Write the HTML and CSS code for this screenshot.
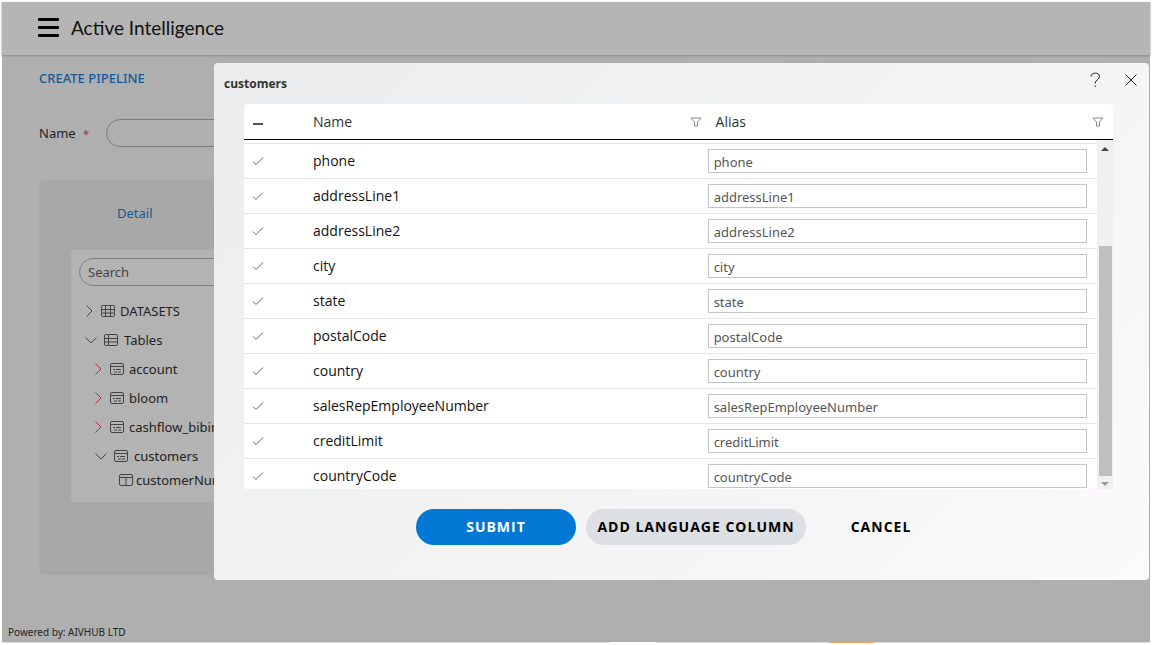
FILE: index.html
```html
<!DOCTYPE html>
<html lang="en">
<head>
<meta charset="utf-8">
<title>Active Intelligence</title>
<link rel="stylesheet" href="styles.css">
</head>
<body>
<svg class="sprite" aria-hidden="true">
  <symbol id="right" viewBox="0 0 14 14"><path d="M4.5 1.5 10 7l-5.500 5.500"/></symbol>
  <symbol id="down" viewBox="0 0 14 14"><path d="M1.500 4.500 7 10l5.500-5.500"/></symbol>
  <symbol id="grid" viewBox="0 0 14 14"><rect x=".5" y="1.500" width="13" height="11" rx="1"/><path d="M.5 5.500h13M.5 9h13M4.500 1.500v11M9.500 1.500v11"/></symbol>
  <symbol id="tables" viewBox="0 0 14 14"><rect x=".5" y="1.500" width="13" height="11" rx="1.500"/><path d="M.5 5.500h13M.5 9h13M4.500 1.500v11"/></symbol>
  <symbol id="sheet" viewBox="0 0 14 14"><rect x=".5" y="1.500" width="13" height="11" rx="1.500"/><path d="M.5 4.500h13M3 7.500h2M6 7.500h5M4 10h3M8 10h3"/></symbol>
  <symbol id="column" viewBox="0 0 14 14"><rect x=".5" y="1.500" width="13" height="11" rx="1.500"/><path d="M.5 4.500h13M7 4.500v8"/></symbol>
  <symbol id="filter" viewBox="0 0 12 12"><path d="M1 2h10L7.500 6v4h-3V6z"/></symbol>
</svg>
<div class="app">
  <header class="topbar">
    <button class="menu" aria-label="Menu"><span></span><span></span><span></span></button>
    <h1>Active Intelligence</h1>
  </header>
  <main class="page">
    <h2>CREATE PIPELINE</h2>
    <div class="field">
      <label for="pname">Name <span class="req">*</span></label>
      <input id="pname" type="text">
    </div>
    <section class="panel">
      <a class="tab" href="#detail">Detail</a>
      <div class="card" id="detail">
        <input class="search" type="text" placeholder="Search" aria-label="Search">
        <ul class="tree">
          <li class="l0"><svg><use href="#right"/></svg><svg><use href="#grid"/></svg>DATASETS</li>
          <li class="l1"><svg><use href="#down"/></svg><svg><use href="#tables"/></svg>Tables</li>
          <li class="l2"><svg class="red"><use href="#right"/></svg><svg><use href="#sheet"/></svg>account</li>
          <li class="l2"><svg class="red"><use href="#right"/></svg><svg><use href="#sheet"/></svg>bloom</li>
          <li class="l2"><svg class="red"><use href="#right"/></svg><svg><use href="#sheet"/></svg>cashflow_bibin</li>
          <li class="l3"><svg><use href="#down"/></svg><svg><use href="#sheet"/></svg>customers</li>
          <li class="l4"><svg><use href="#column"/></svg>customerNumber</li>
        </ul>
      </div>
    </section>
  </main>
  <footer class="foot">Powered by: AIVHUB LTD</footer>
  <div class="taskbar"></div>

  <div class="dialog" role="dialog" aria-labelledby="dtitle">
    <div class="dhead">
      <h3 id="dtitle">customers</h3>
      <div class="tools">
        <button aria-label="Help"><svg viewBox="0 0 16 16"><path d="M4 4.500C4 .2 12.500-.2 12.500 4.500 12.500 7.500 8.200 7.800 8.200 11.500M8.200 13.500v1.500"/></svg></button>
        <button aria-label="Close"><svg viewBox="0 0 16 16"><path d="M2.500 2.500l11 11M13.500 2.500l-11 11"/></svg></button>
      </div>
    </div>
    <div class="list">
      <table class="head">
        <thead><tr>
          <th class="c1"><input type="checkbox" class="tick partial" aria-label="Select all"></th>
          <th><div class="th">Name<svg><use href="#filter"/></svg></div></th>
          <th class="c3"><div class="th">Alias<svg><use href="#filter"/></svg></div></th>
        </tr></thead>
      </table>
      <div class="scroll">
        <div class="rows">
          <table class="body"><tbody>
            <tr><td class="c1"><input type="checkbox" class="tick" checked aria-label="Select phone"></td><td>phone</td><td class="c3"><input type="text" value="phone" aria-label="Alias of phone"></td></tr>
            <tr><td class="c1"><input type="checkbox" class="tick" checked aria-label="Select addressLine1"></td><td>addressLine1</td><td class="c3"><input type="text" value="addressLine1" aria-label="Alias of addressLine1"></td></tr>
            <tr><td class="c1"><input type="checkbox" class="tick" checked aria-label="Select addressLine2"></td><td>addressLine2</td><td class="c3"><input type="text" value="addressLine2" aria-label="Alias of addressLine2"></td></tr>
            <tr><td class="c1"><input type="checkbox" class="tick" checked aria-label="Select city"></td><td>city</td><td class="c3"><input type="text" value="city" aria-label="Alias of city"></td></tr>
            <tr><td class="c1"><input type="checkbox" class="tick" checked aria-label="Select state"></td><td>state</td><td class="c3"><input type="text" value="state" aria-label="Alias of state"></td></tr>
            <tr><td class="c1"><input type="checkbox" class="tick" checked aria-label="Select postalCode"></td><td>postalCode</td><td class="c3"><input type="text" value="postalCode" aria-label="Alias of postalCode"></td></tr>
            <tr><td class="c1"><input type="checkbox" class="tick" checked aria-label="Select country"></td><td>country</td><td class="c3"><input type="text" value="country" aria-label="Alias of country"></td></tr>
            <tr><td class="c1"><input type="checkbox" class="tick" checked aria-label="Select salesRepEmployeeNumber"></td><td>salesRepEmployeeNumber</td><td class="c3"><input type="text" value="salesRepEmployeeNumber" aria-label="Alias of salesRepEmployeeNumber"></td></tr>
            <tr><td class="c1"><input type="checkbox" class="tick" checked aria-label="Select creditLimit"></td><td>creditLimit</td><td class="c3"><input type="text" value="creditLimit" aria-label="Alias of creditLimit"></td></tr>
            <tr><td class="c1"><input type="checkbox" class="tick" checked aria-label="Select countryCode"></td><td>countryCode</td><td class="c3"><input type="text" value="countryCode" aria-label="Alias of countryCode"></td></tr>
          </tbody></table>
        </div>
        <div class="bar"><i class="up"></i><i class="thumb"></i><i class="dn"></i></div>
      </div>
    </div>
    <div class="actions">
      <button class="btn primary">SUBMIT</button>
      <button class="btn grey">ADD LANGUAGE COLUMN</button>
      <button class="btn plain">CANCEL</button>
    </div>
  </div>
</div>
</body>
</html>
```
FILE: styles.css
```css
* { box-sizing: border-box; }
body {
  margin: 0;
  padding: 2px;
  background: #fff;
  font: 13px/20px "Noto Sans", "Open Sans", sans-serif;
  color: #222;
}
h1, h2, h3, ul { margin: 0; padding: 0; font-weight: 400; }
input, button { font: inherit; color: inherit; margin: 0; }
button { border: 0; padding: 0; background: none; cursor: pointer; }
svg { fill: none; stroke: currentColor; flex: none; }
.sprite { display: none; }

.app {
  position: relative;
  display: flex;
  flex-direction: column;
  min-height: calc(100vh - 4px);
  background: #afafaf;
}
.topbar {
  display: flex;
  align-items: center;
  gap: 12px;
  height: 53px;
  padding: 0 0 2px 36px;
  background: #b5b5b5;
  box-shadow: 0 1px 2px #888;
}
.menu { display: flex; flex-direction: column; gap: 5px; width: 21px; }
.menu span { height: 3px; border-radius: 1px; background: #000; }
.topbar h1 { font: 19px/24px Lato, sans-serif; color: #111; }

.page { flex: 1; padding: 13px 37px 0; }
.page h2 { font-size: 13px; color: #155a96; font-weight: 500; }
.field { display: flex; align-items: center; gap: 17px; margin-top: 31px; }
.req { margin-left: 4px; font-size: 11px; color: #8b3a3a; }
.field label { min-width: 48px; }
.field input, .search {
  height: 28px;
  border: 1px solid #7e7e7e;
  border-radius: 14px;
  background: none;
}
.field input { flex: 1; }
.panel {
  margin-top: 33px;
  padding: 23px 32px 73px;
  border-radius: 6px;
  background: #a8a8a8;
}
.tab { display: block; margin-left: 46px; color: #155a96; text-decoration: none; }
.card { margin-top: 27px; padding: 8px 8px 12px; border-radius: 4px; background: #b3b3b3; }
.search { display: block; width: 100%; padding: 0 8px; }
.search::placeholder { color: #444; opacity: 1; }
.tree { margin-top: 10px; list-style: none; }
.tree li { display: flex; align-items: center; gap: 5px; height: 29px; white-space: nowrap; }
.tree svg { width: 14px; height: 14px; color: #444; }
.tree svg.red { color: #a33; }
.l0 { padding-left: 3px; }
.tree .l1 { padding-left: 5px; gap: 6px; }
.l2 { padding-left: 12px; }
.tree .l3 { padding-left: 15px; gap: 6px; }
.tree .l4 { height: 20px; padding-left: 40px; gap: 3px; }
.foot { padding: 0 6px; font-size: 10px; }
.taskbar {
  height: 1px;
  background: linear-gradient(90deg, #ddd 53%, #fff 53% 57%, #ddd 57% 72%, #f0a566 72% 76%, #ddd 76%);
}

.dialog {
  position: absolute;
  top: 61px;
  left: 212px;
  right: 1px;
  padding: 0 36px 35px 30px;
  border-radius: 4px;
  background: linear-gradient(135deg, #ebedef, #f2f2f2 45%, #fcfafc);
}
.dhead {
  display: flex;
  justify-content: space-between;
  align-items: center;
  height: 41px;
  margin: 0 -26px 0 -20px;
}
.dhead h3 { font: 700 12px/20px "Open Sans", sans-serif; color: #333; }
.tools { display: flex; gap: 20px; padding-bottom: 8px; }
.tools button, .tools svg { display: block; width: 16px; height: 16px; }
.list { border-radius: 4px; overflow: hidden; }
table { width: 100%; border-collapse: collapse; table-layout: fixed; background: #fff; }
th, td { padding: 0; text-align: left; font-family: "Open Sans", sans-serif; font-size: 14px; }
.c1 { width: 69px; padding-left: 8px; }
.head tr { height: 35px; }
.head th { padding-top: 2px; font-weight: 500; color: #333; border-bottom: 1px solid #000; }
.head .c3 { width: 47%; padding: 2px 6px 0 11px; }
.th { display: flex; justify-content: space-between; align-items: center; padding-right: 3px; }
.th svg { width: 12px; height: 12px; color: #888; }
.scroll { display: flex; height: 349px; overflow: hidden; }
.rows { flex: 1; padding-top: 3px; background: #fff; overflow: hidden; }
.body tr { height: 35px; border-top: 1px solid #e4e4e4; color: #111; }
.body .c3 { width: 46%; padding: 0 10px 0 3px; }
.body input[type="text"] {
  display: block;
  width: 100%;
  height: 24px;
  padding: 2px 5px 0;
  border: 1px solid #c2c5c8;
  border-radius: 0;
  background: #fff;
  color: #555;
  font: 13px/20px "Noto Sans", sans-serif;
}
.tick {
  appearance: none;
  display: block;
  width: 12px;
  height: 12px;
  background: url("data:image/svg+xml,%3Csvg xmlns='http://www.w3.org/2000/svg' viewBox='0 0 12 12' fill='none' stroke='%23666'%3E%3Cpath d='M1 6.500l3 3 7-7'/%3E%3C/svg%3E") center / 12px no-repeat;
}
.partial { background: linear-gradient(#555, #555) 1px 7px / 10px 2px no-repeat; }
.bar { display: flex; flex-direction: column; align-items: center; width: 16px; padding: 7px 0 3px; background: #f0f0f0; }
.up, .dn { border: 4px solid transparent; border-top-width: 0; border-bottom-color: #444; }
.dn { border-top: 4px solid #999; border-bottom-width: 0; }
.thumb { flex: 1; width: 13px; margin: 95px 0 6px; background: #bfbfbf; }

.actions { display: flex; justify-content: center; gap: 10px; padding: 20px 0 0 5px; }
.btn { height: 36px; border-radius: 18px; font: 700 14px/20px "Open Sans", sans-serif; letter-spacing: 1px; color: #000; }
.primary { width: 160px; background: #0078d4; color: #fff; }
.grey { width: 220px; background: #dcdfe3; }
.plain { width: 130px; }
```
